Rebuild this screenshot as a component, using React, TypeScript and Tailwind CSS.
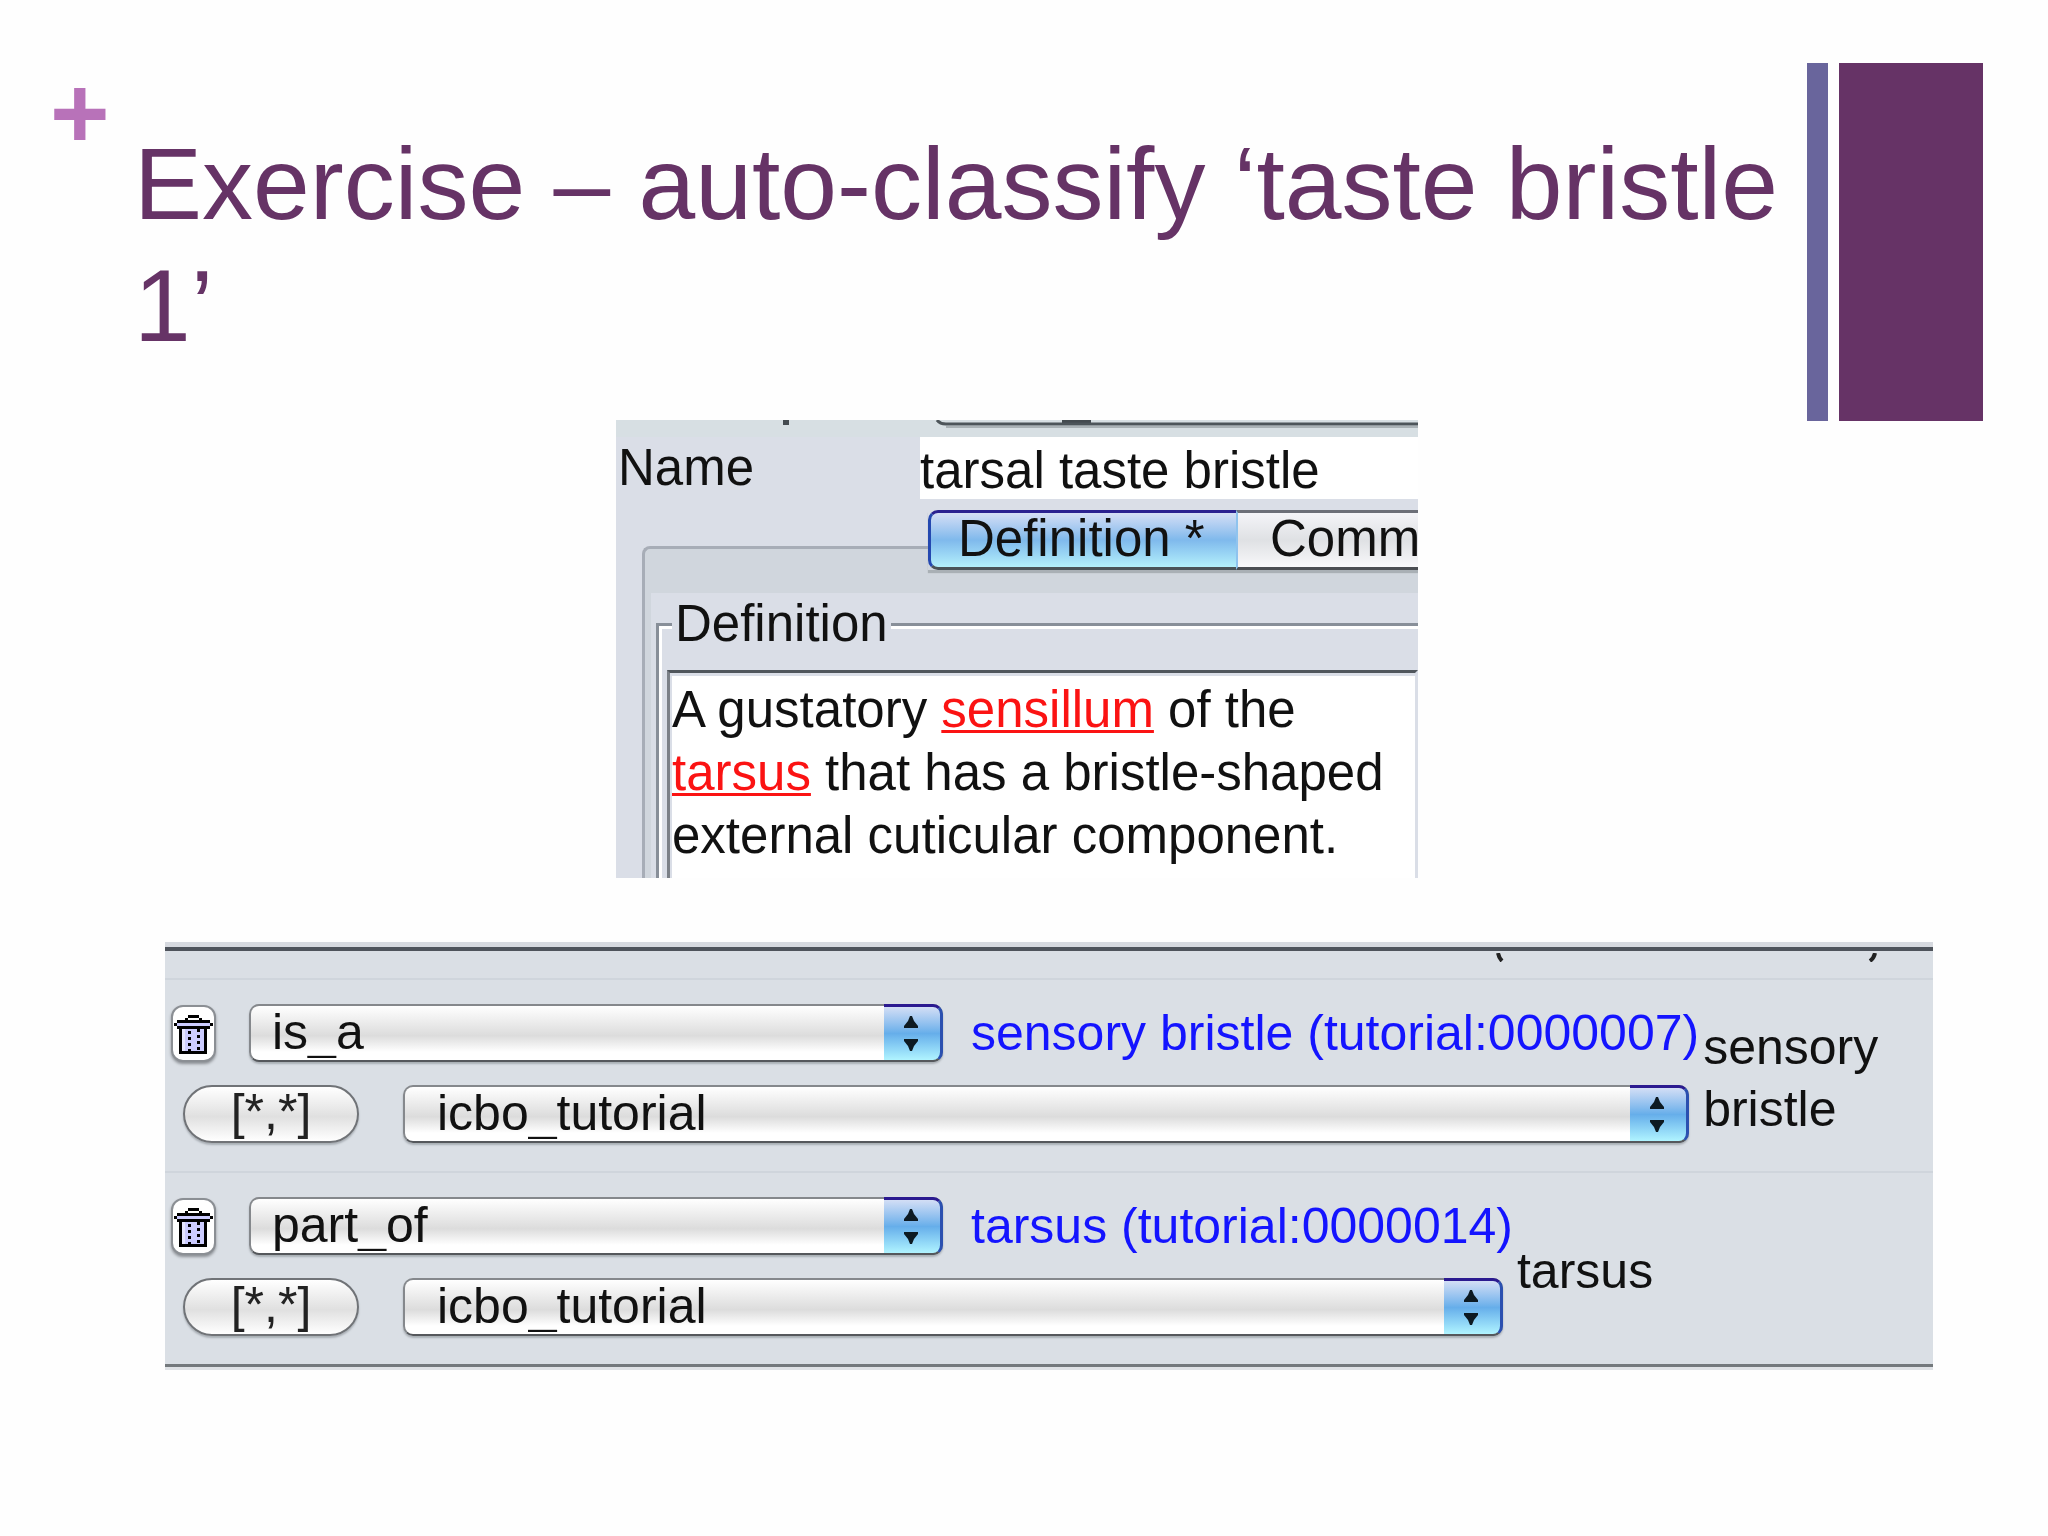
import { useState } from 'react'

interface Relation {
  id: string
  type: string
  target: string
  label: string
}

const RELATIONS: Relation[] = [
  { id: 'r1', type: 'is_a', target: 'sensory bristle (tutorial:0000007)', label: 'sensory bristle' },
  { id: 'r2', type: 'part_of', target: 'tarsus (tutorial:0000014)', label: 'tarsus' },
]

function TrashIcon() {
  return (
    <svg width="39" height="39" viewBox="0 0 39 39" shapeRendering="crispEdges" aria-hidden="true">
      <path d="M14 0h11v3h3v3h-3V3H14v3h-3V3h3z" fill="#000" />
      <path d="M3 5h33v3h3v3h-3v3H3v-3H0V8h3z" fill="#000" />
      <path d="M3 8h33v3H3z" fill="#ccccff" />
      <path d="M5 14h28v25H5z" fill="#000" />
      <path d="M8 14h22v22H8z" fill="#ccccff" />
      <path d="M8 14h3v22H8z" fill="#e6e6ff" />
      <path d="M15 16v21M24 14v23" stroke="#000" strokeWidth="3" strokeDasharray="3 3" />
    </svg>
  )
}

function Arrows() {
  return (
    <svg width="14" height="36" viewBox="0 0 14 36" aria-hidden="true">
      <path d="M6 0h2l2 5 4 5v2H0v-2l4-5z" fill="#0d1a22" />
      <path d="M6 35h2l2-5 4-5v-2H0v2l4 5z" fill="#0d1a22" />
    </svg>
  )
}

function PopUp({ name, value, className, pad }: { name: string; value: string; className: string; pad: string }) {
  return (
    <div className={`relative h-[58px] ${className}`}>
      <select
        aria-label={name}
        defaultValue={value}
        className={`block h-full w-full appearance-none rounded-[10px] border-2 border-[#85888c] border-b-[#55585c] bg-linear-to-b from-white via-[#dcdcdc] via-55% to-white to-85% pb-[2px] text-[50px] leading-[52px] text-[#111] shadow-[0_2px_2px_#a9afb5] ${pad}`}
      >
        <option>{value}</option>
      </select>
      <span className="pointer-events-none absolute top-0 right-0 flex h-full w-[59px] items-center justify-center rounded-r-[10px] border-t-[3px] border-r-[3px] border-b-2 border-t-[#2b1a90] border-r-[#2b50b0] border-b-[#55585c] bg-linear-to-b from-[#d3def5] via-[#66aeea] via-50% to-[#b0f4ff] pr-[2px]">
        <Arrows />
      </span>
    </div>
  )
}

function RelationRow({ relation }: { relation: Relation }) {
  return (
    <li className="flex h-[193px] items-start border-t-2 border-[#cfd5dc] pt-[22px] pl-[6px]">
      <div className="flex items-center">
        <div className="flex flex-col gap-[21px] pb-[12px]">
          <div className="flex items-center">
            <button
              type="button"
              aria-label={`Delete ${relation.type}`}
              className="mr-[33px] flex h-[57px] w-[45px] items-center justify-center rounded-[12px] border-2 border-[#8b8f94] bg-white pt-[2px] shadow-[0_2px_3px_#8b8f94]"
            >
              <TrashIcon />
            </button>
            <PopUp name="Relation" value={relation.type} className="w-[694px]" pad="pl-[21px]" />
            <a href="#" className="pr-[4px] pl-[28px] leading-[62px] whitespace-nowrap text-[#1414ff]">
              {relation.target}
            </a>
          </div>
          <div className="flex items-center pr-[14px] pl-[12px]">
            <button
              type="button"
              className="mr-[44px] h-[58px] w-[176px] rounded-full border-2 border-[#707377] bg-linear-to-b from-white via-[#e0e0e0] via-55% to-white pb-[4px] leading-[50px] text-[#222] shadow-[0_2px_2px_#a9afb5]"
            >
              [*,*]
            </button>
            <PopUp name="Ontology" value="icbo_tutorial" className="flex-1" pad="pl-[32px]" />
          </div>
        </div>
        <p className="w-[190px] pb-[2px] leading-[62px] text-[#111]">{relation.label}</p>
      </div>
    </li>
  )
}

function DefinitionPanel() {
  const [name, setName] = useState('tarsal taste bristle')

  return (
    <section className="h-[458px] w-[802px] overflow-hidden bg-[#dadee7] text-[51px] text-[#111]">
      {/* bottom edge of the row that is scrolled out of view */}
      <svg className="block" width="802" height="17" viewBox="0 0 802 17" aria-hidden="true">
        <path d="M0 0h802v17H0z" fill="#d7dfe3" />
        <path d="M167 0h6v5h-6zM446 0h29v4h-29z" fill="#444b50" />
        <path d="M321 0q3 4 9 4h472" fill="none" stroke="#4d555a" strokeWidth="3" />
        <path d="M330 7h472" stroke="#aab2b6" strokeWidth="2" />
      </svg>

      <div className="flex h-[62px] items-center">
        <label htmlFor="term-name" className="w-[304px] pl-[2px] leading-[62px]">
          Name
        </label>
        <input
          id="term-name"
          value={name}
          onChange={(e) => setName(e.target.value)}
          className="h-full min-w-0 flex-1 bg-white pt-[4px]"
        />
      </div>

      <div className="relative z-10 mt-[11px] ml-[312px] flex h-[60px] shadow-[0_3px_1px_#a9b0b5]">
        <button
          type="button"
          className="w-[308px] shrink-0 rounded-l-[10px] border-t-[3px] border-b-[3px] border-l-[3px] border-t-[#2b2190] border-b-[#4a5358] border-l-[#2448b0] bg-linear-to-b from-[#d5def5] via-[#7fb9ec] via-50% to-[#b4f0fb] pb-[2px] pl-[27px] text-left leading-[52px]"
        >
          Definition *
        </button>
        <button
          type="button"
          className="min-w-0 flex-1 border-t-[3px] border-b-[3px] border-l-2 border-t-[#6c6f78] border-b-[#4a4d52] border-l-[#8fc3ee] bg-linear-to-b from-[#f4f4f8] via-[#dfe1e4] via-50% to-[#f8f8fa] pb-[2px] pl-[32px] text-left leading-[52px]"
        >
          Comm
        </button>
      </div>

      <div className="-mt-[24px] ml-[26px] rounded-tl-[8px] border-t-[3px] border-l-[3px] border-[#a7adb7] bg-[#d0d6dd] pt-[44px]">
        <div className="ml-[6px] bg-[#dadee7] pl-[5px]">
          <fieldset className="min-w-0 border-t-[3px] border-l-[3px] border-[#888f99] pl-[8px] shadow-[inset_3px_3px_0_#fff]">
            <legend className="ml-[5px] bg-[#dadee7] px-[3px] leading-[62px]">Definition</legend>
            <div className="mt-[15px] h-[220px] border-t-[3px] border-r-[3px] border-l-[3px] border-t-[#50565c] border-r-[#dadee7] border-l-[#7b8087] bg-white pt-[5px] pl-[2px] shadow-[inset_2px_3px_0_#dadee7]">
              <p className="leading-[63px]">
                A gustatory{' '}
                <a href="#" className="text-[#fb1313] underline decoration-3 underline-offset-[3px] [text-decoration-skip-ink:none]">
                  sensillum
                </a>{' '}
                of the
                <br />
                <a href="#" className="text-[#fb1313] underline decoration-3 underline-offset-[3px] [text-decoration-skip-ink:none]">
                  tarsus
                </a>{' '}
                that has a bristle-shaped
                <br />
                external cuticular component.
              </p>
            </div>
          </fieldset>
        </div>
      </div>
    </section>
  )
}

export default function App() {
  return (
    <main className="min-h-screen bg-[#fefefe] pt-[63px] font-['Liberation_Sans',Arial,sans-serif]">
      <header className="flex h-[358px] pr-[65px] pl-[50px]">
        <div className="w-[84px] text-[102px] leading-[100px] font-bold text-[#b872b9]">+</div>
        <h1 className="flex-1 pt-[60px] text-[102px] leading-[122px] text-[#663366]">
          Exercise – auto-classify ‘taste bristle 1’
        </h1>
        <div className="mr-[11px] w-[21px] bg-[#69659c]" />
        <div className="w-[144px] bg-[#663366]" />
      </header>

      <div className="-mt-px flex justify-center pr-[14px]">
        <DefinitionPanel />
      </div>

      <section className="mt-[64px] mr-[115px] ml-[165px] border-t-[5px] border-b-[3px] border-t-[#d6d9df] border-b-[#dfe2e6] bg-[#dadfe5] text-[50px]">
        {/* tails of the brackets from the row above */}
        <div className="flex h-[31px] justify-end border-t-[4px] border-[#4e535b]">
          <svg className="mt-[2px] mr-[56px]" width="382" height="9" viewBox="0 0 382 9" aria-hidden="true">
            <path d="M3 0q1 5 4 8M380 0q-1 5-5 8" fill="none" stroke="#222" strokeWidth="4" />
          </svg>
        </div>
        <ul className="border-b-[3px] border-[#74797d]">
          {RELATIONS.map((relation) => (
            <RelationRow key={relation.id} relation={relation} />
          ))}
        </ul>
      </section>
    </main>
  )
}
